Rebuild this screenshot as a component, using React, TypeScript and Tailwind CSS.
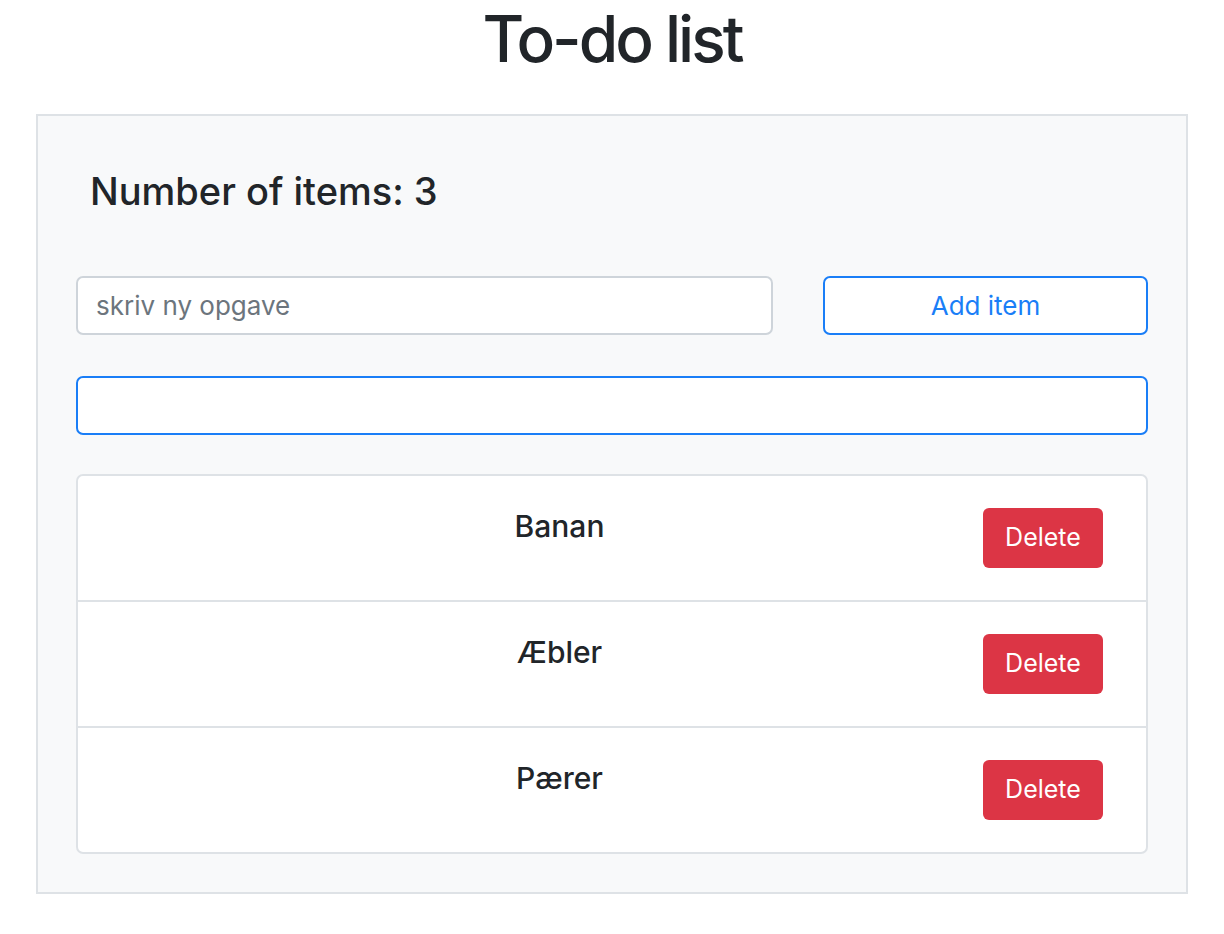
import React from "react";

const items = ["Banan", "Æbler", "Pærer"];

export default function App() {
  return (
    <div className="min-h-screen bg-white font-['Inter','Liberation_Sans',sans-serif] text-[#212529]">
      <h1 className="m-0 text-center text-[64px] font-medium leading-[77px] tracking-[-3px]">To-do list</h1>
      <div className="mx-auto mt-[37px] w-[1152px] border-2 border-[#dee2e6] bg-[#f8f9fa] px-[38px] pb-[38px] pt-[52px]">
        <h3 className="m-0 pl-[14px] text-[38px] font-medium leading-[46px]">Number of items: 3</h3>
        <div className="mt-[62px] flex items-center">
          <input
            className="h-[59px] w-[697px] rounded-[7px] border-2 border-[#ced4da] bg-white px-[18px] text-[26px] text-[#495057] outline-none placeholder:text-[#6c757d]"
            placeholder="skriv ny opgave"
          />
          <button className="ml-auto h-[59px] w-[325px] rounded-[7px] border-2 border-[#1a7ef7] bg-white text-[26px] text-[#1a7ef7]">
            Add item
          </button>
        </div>
        <input className="mt-[41px] block h-[59px] w-full rounded-[7px] border-2 border-[#1a7ef7] bg-white px-[18px] text-[26px] outline-none" />
        <div className="mt-[39px] overflow-hidden rounded-[7px] border-2 border-[#dee2e6] bg-white">
          {items.map((it, i) => (
            <div
              key={it}
              className={`flex items-start px-[43px] pt-[32px] ${i > 0 ? "h-[126px] border-t-2 border-[#dee2e6]" : "h-[124px]"}`}
            >
              <div className="flex-1 pl-[15px] text-center text-[30px] font-medium leading-[36px]">{it}</div>
              <button className="h-[60px] w-[120px] rounded-[6px] bg-[#dc3545] text-[25px] text-white">Delete</button>
            </div>
          ))}
        </div>
      </div>
    </div>
  );
}
